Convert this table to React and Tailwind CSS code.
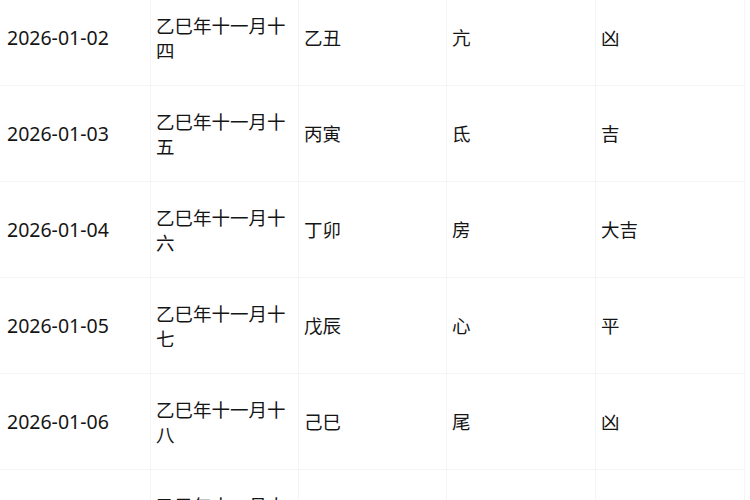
const rows = [
  ['2026-01-02', '乙巳年十一月十四', '乙丑', '亢', '凶'],
  ['2026-01-03', '乙巳年十一月十五', '丙寅', '氐', '吉'],
  ['2026-01-04', '乙巳年十一月十六', '丁卯', '房', '大吉'],
  ['2026-01-05', '乙巳年十一月十七', '戊辰', '心', '平'],
  ['2026-01-06', '乙巳年十一月十八', '己巳', '尾', '凶'],
  ['2026-01-07', '乙巳年十一月十九', '庚午', '箕', '吉'],
];

const cell = 'h-[96px] flex items-center pl-[5px] border-r border-b border-[#f4f4f4] text-[18.5px] leading-[25px] font-["Noto_Sans_CJK_SC","Noto_Sans",sans-serif]';

export default function App() {
  return (
    <div className="w-[750px] h-[500px] overflow-hidden bg-white text-[#151515]">
      <div className="-mt-[10px] w-[745px] grid grid-cols-[151px_148px_148px_149px_149px]">
        {rows.map((r) => (
          <div key={r[0]} className="contents">
            <div className="h-[96px] flex items-center pl-[7px] border-r border-b border-[#f4f4f4] text-[19.5px] font-['Noto_Sans',sans-serif]">
              {r[0]}
            </div>
            <div className={cell + ' pr-[8px]'}>{r[1]}</div>
            <div className={cell}>{r[2]}</div>
            <div className={cell}>{r[3]}</div>
            <div className={cell}>{r[4]}</div>
          </div>
        ))}
      </div>
    </div>
  );
}
